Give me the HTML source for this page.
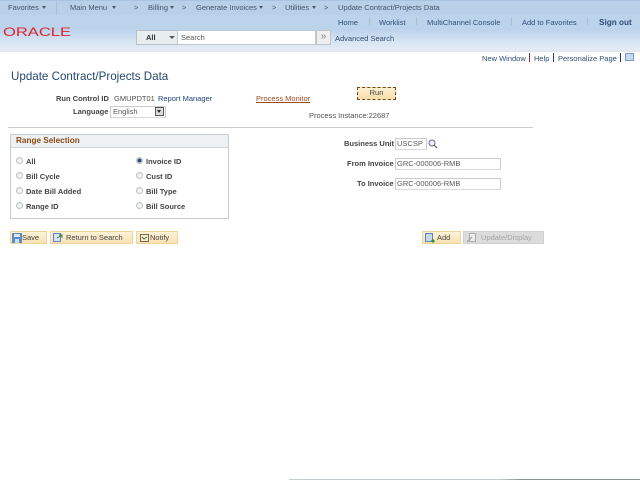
<!DOCTYPE html>
<html>
<head>
<meta charset="utf-8">
<style>
html,body{margin:0;padding:0;background:#fff;}
body{width:640px;height:480px;position:relative;overflow:hidden;font-family:"Liberation Sans",sans-serif;font-size:7.5px;color:#505050;}
.a{position:absolute;white-space:nowrap;line-height:11px;}
.b{font-weight:bold;color:#444;}
.nav{color:#43566c;font-size:7.5px;top:2px;}
.top{color:#2f4e72;font-size:7.5px;top:17px;}
.sep{position:absolute;width:1px;background:#a8c0d8;}
.tri{position:absolute;top:6px;width:0;height:0;border-left:2.5px solid transparent;border-right:2.5px solid transparent;border-top:3px solid #4a5a6c;}
.in{position:absolute;box-sizing:border-box;border:1px solid #c8cccc;border-bottom-color:#d8d8d8;background:#fff;color:#5a5a5a;font-size:7.5px;line-height:10px;padding-left:1px;}
.btn{position:absolute;box-sizing:border-box;height:13px;top:231px;background:linear-gradient(#fdf2d8,#f8e2b4);border:1px solid #ecd49c;color:#444;font-size:7.5px;line-height:11px;white-space:nowrap;}
.r{position:absolute;box-sizing:border-box;width:7px;height:7px;border-radius:50%;border:1px solid #c0c4c4;background:radial-gradient(circle at 60% 60%,#fff,#dce0e0);}
.ln{position:absolute;background:#c8cccc;}
</style>
</head>
<body>
<div style="position:absolute;left:0;top:0;width:640px;height:51px;background:linear-gradient(#bcd3ec 0,#bcd3ec 30px,#d4e2f2 40px,#e4ecf6 50px);"></div>
<div style="position:absolute;left:0;top:0;width:640px;height:15px;background:#b8d0e8;border-top:1px solid #a8c4e0;box-sizing:border-box;"></div>
<div style="position:absolute;left:0;top:50px;width:640px;height:2px;background:#e2e6ee;"></div>

<div class="a nav" style="left:8px">Favorites</div><div class="tri" style="left:42px"></div>
<div class="sep" style="left:56px;top:1px;height:14px"></div>
<div class="a nav" style="left:70px">Main Menu</div><div class="tri" style="left:112px"></div>
<div class="a nav" style="left:134px">&gt;</div>
<div class="a nav" style="left:148px">Billing</div><div class="tri" style="left:170px"></div>
<div class="a nav" style="left:182px">&gt;</div>
<div class="a nav" style="left:196px">Generate Invoices</div><div class="tri" style="left:259px"></div>
<div class="a nav" style="left:272px">&gt;</div>
<div class="a nav" style="left:285px">Utilities</div><div class="tri" style="left:312px"></div>
<div class="a nav" style="left:324px">&gt;</div>
<div class="a nav" style="left:338px">Update Contract/Projects Data</div>

<div class="a top" style="left:338px">Home</div>
<div class="sep" style="left:369px;top:17px;height:8px"></div>
<div class="a top" style="left:379px">Worklist</div>
<div class="sep" style="left:416px;top:17px;height:8px"></div>
<div class="a top" style="left:427px">MultiChannel Console</div>
<div class="sep" style="left:511px;top:17px;height:8px"></div>
<div class="a top" style="left:522px">Add to Favorites</div>
<div class="sep" style="left:587px;top:17px;height:8px"></div>
<div class="a top" style="left:599px;font-weight:bold;font-size:8.2px">Sign out</div>

<svg style="position:absolute;left:3px;top:26px" width="70" height="11"><text x="0" y="10" font-family="Liberation Sans" font-size="11.5" fill="#e0212b" textLength="68" lengthAdjust="spacingAndGlyphs">ORACLE</text></svg>

<div style="position:absolute;left:136px;top:30px;width:41px;height:15px;box-sizing:border-box;background:#e8eeee;border:1px solid #b8c0c8;border-right:none;"></div>
<div class="a b" style="left:146px;top:32px;font-size:7.5px;color:#333">All</div>
<div style="position:absolute;left:169px;top:36px;border:3px solid transparent;border-top:3px solid #555;border-bottom:none"></div>
<div class="in" style="left:177px;top:30px;width:139px;height:15px;line-height:13px;border-color:#c0c8d0;padding-left:3px;color:#555">Search</div>
<div style="position:absolute;left:316px;top:30px;width:15px;height:15px;box-sizing:border-box;background:#eee;border:1px solid #c0c4c8;color:#889;font-size:10px;line-height:11px;text-align:center">»</div>
<div class="a top" style="left:335px;top:33px">Advanced Search</div>

<div class="a" style="left:482px;top:53px;color:#2f4e72">New Window</div>
<div style="position:absolute;left:529px;top:53px;width:1px;height:9px;background:#7a3030"></div>
<div class="a" style="left:534px;top:53px;color:#2f4e72">Help</div>
<div style="position:absolute;left:553px;top:53px;width:1px;height:9px;background:#303080"></div>
<div class="a" style="left:558px;top:53px;color:#2f4e72">Personalize Page</div>
<div style="position:absolute;left:620px;top:53px;width:1px;height:9px;background:#303080"></div>
<div style="position:absolute;left:625px;top:53px;width:9px;height:8px;box-sizing:border-box;border:1px solid #7c98d0;background:#c8d8f0"></div>

<div class="a" style="left:11px;top:70px;font-size:11.6px;line-height:14px;color:#26476e">Update Contract/Projects Data</div>

<div class="a b" style="left:56px;top:93px">Run Control ID</div>
<div class="a" style="left:114px;top:93px">GMUPDT01</div>
<div class="a" style="left:158px;top:93px;color:#1f4478">Report Manager</div>
<div class="a" style="left:256px;top:93px;color:#9a4a20;text-decoration:underline">Process Monitor</div>
<div style="position:absolute;left:357px;top:87px;width:39px;height:13px;box-sizing:border-box;background:linear-gradient(#fdf0d4,#f6dca8);border:1px dashed #6a4a18;color:#444;text-align:center;line-height:10px;font-size:7.5px">Run</div>
<div class="a b" style="left:73px;top:106px">Language</div>
<div class="in" style="left:110px;top:106px;width:56px;height:12px;background:#fff;padding-left:2px">English</div>
<div style="position:absolute;left:155px;top:107px;width:9px;height:9px;box-sizing:border-box;background:#ddd;border:1px solid #555"><div style="position:absolute;left:1px;top:2px;border:2.5px solid transparent;border-top:3px solid #222;border-bottom:none"></div></div>
<div class="a" style="left:309px;top:110px">Process Instance:22687</div>
<div class="ln" style="left:8px;top:127px;width:525px;height:1px"></div>

<div style="position:absolute;left:10px;top:134px;width:219px;height:85px;box-sizing:border-box;border:1px solid #c8cccc;"></div>
<div style="position:absolute;left:11px;top:135px;width:217px;height:12px;background:#eef1f3;border-bottom:1px solid #d0d4d4"></div>
<div class="a" style="left:16px;top:135px;font-weight:bold;color:#8a4a14;font-size:8.2px">Range Selection</div>

<div class="r" style="left:16px;top:157px"></div><div class="a b" style="left:26px;top:156px">All</div>
<div class="r" style="left:16px;top:172px"></div><div class="a b" style="left:26px;top:171px">Bill Cycle</div>
<div class="r" style="left:16px;top:187px"></div><div class="a b" style="left:26px;top:186px">Date Bill Added</div>
<div class="r" style="left:16px;top:202px"></div><div class="a b" style="left:26px;top:201px">Range ID</div>
<div class="r" style="left:136px;top:157px;background:radial-gradient(circle,#24497c 0,#24497c 1.5px,#e8ecec 2.5px)"></div><div class="a b" style="left:146px;top:156px">Invoice ID</div>
<div class="r" style="left:136px;top:172px"></div><div class="a b" style="left:146px;top:171px">Cust ID</div>
<div class="r" style="left:136px;top:187px"></div><div class="a b" style="left:146px;top:186px">Bill Type</div>
<div class="r" style="left:136px;top:202px"></div><div class="a b" style="left:146px;top:201px">Bill Source</div>

<div class="a b" style="left:344px;top:138px">Business Unit</div>
<div class="in" style="left:395px;top:138px;width:32px;height:12px">USCSP</div>
<svg style="position:absolute;left:428px;top:139px" width="10" height="10"><circle cx="4" cy="4" r="3" fill="#eef" stroke="#667" stroke-width="1"/><path d="M6 6L9 9" stroke="#666" stroke-width="1.2"/></svg>
<div class="a b" style="left:347px;top:158px">From Invoice</div>
<div class="in" style="left:395px;top:158px;width:106px;height:12px">GRC-000006-RMB</div>
<div class="a b" style="left:357px;top:178px">To Invoice</div>
<div class="in" style="left:395px;top:178px;width:106px;height:12px">GRC-000006-RMB</div>

<div class="btn" style="left:10px;width:37px"><svg style="position:absolute;left:1px;top:1px" width="10" height="10"><rect width="10" height="10" fill="#5a8cc8"/><rect x="2" y="1" width="6" height="3" fill="#dce8f4"/><rect x="3" y="6" width="4" height="4" fill="#cddcec"/></svg><span style="position:absolute;left:11px">Save</span></div>
<div class="btn" style="left:50px;width:83px"><svg style="position:absolute;left:2px;top:1px" width="10" height="10"><rect x=".5" y=".5" width="7" height="8" fill="#d8e4f4" stroke="#5a84c0"/><path d="M4 5L9 2M6 2h3v3" stroke="#3a7a40" fill="none"/></svg><span style="position:absolute;left:15px">Return to Search</span></div>
<div class="btn" style="left:136px;width:42px"><svg style="position:absolute;left:3px;top:2px" width="9" height="8"><rect x=".5" y=".5" width="8" height="7" fill="#f4eed8" stroke="#7a6a40"/><path d="M2 3l2 2 3-2" stroke="#5a6a40" fill="none"/></svg><span style="position:absolute;left:13px">Notify</span></div>
<div class="btn" style="left:422px;width:39px"><svg style="position:absolute;left:2px;top:1px" width="11" height="10"><rect x=".5" y=".5" width="7" height="8" fill="#c8d8ec" stroke="#5a84c0"/><path d="M8 6v4M6 8h4" stroke="#2a8a3a" stroke-width="1.2"/></svg><span style="position:absolute;left:14px">Add</span></div>
<div class="btn" style="left:463px;width:81px;background:#dcdcdc;border-color:#d0d0d0;color:#a4a4a4"><svg style="position:absolute;left:3px;top:1px" width="10" height="10"><rect x="2.5" y=".5" width="6" height="8" fill="#eee" stroke="#aaa"/><path d="M0 9L5 4" stroke="#999"/></svg><span style="position:absolute;left:17px">Update/Display</span></div>

<div style="position:absolute;left:289px;top:479px;width:351px;height:1px;background:linear-gradient(90deg,#c4ccd0 0,#c4ccd0 60%,#8a9292 66%,#8a9292 100%)"></div>
</body>
</html>
